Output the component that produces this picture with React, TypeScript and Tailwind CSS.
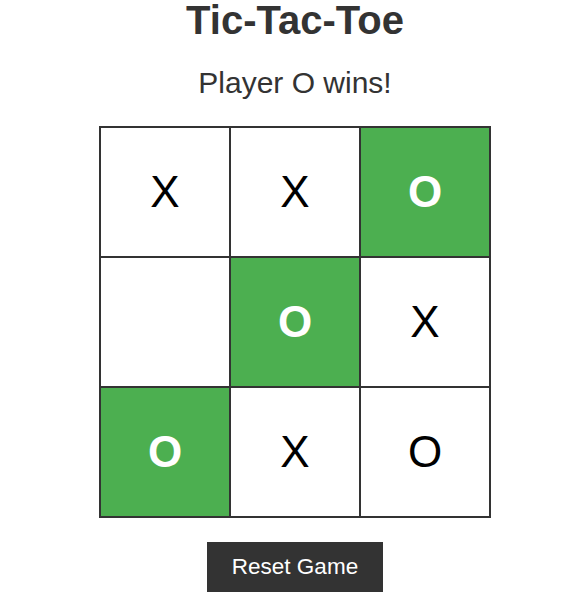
import React from "react";

const board: (string | null)[] = ["X", "X", "O", null, "O", "X", "O", "X", "O"];
const win = [2, 4, 6];

export default function App() {
  return (
    <div
      className="flex w-[578px] flex-col items-center pl-[12px] text-[#333]"
      style={{ fontFamily: '"Liberation Sans", Arial, sans-serif' }}
    >
      <h1 className="text-[40px] font-bold leading-[40px]">Tic-Tac-Toe</h1>
      <p className="mt-[28px] text-[30px] leading-[30px]">Player O wins!</p>
      <div className="mt-[28px] grid grid-cols-[repeat(3,130px)] border border-[#333]">
        {board.map((v, i) => {
          const w = win.includes(i);
          return (
            <div
              key={i}
              className={
                w
                  ? "flex h-[130px] w-[130px] items-center justify-center border border-[#333] bg-[#4caf50] text-[44px] font-bold text-white"
                  : "flex h-[130px] w-[130px] items-center justify-center border border-[#333] bg-white text-[44px] text-black"
              }
            >
              {v}
            </div>
          );
        })}
      </div>
      <button className="mt-[24px] h-[50px] w-[176px] bg-[#333] text-[22.5px] text-white">
        Reset Game
      </button>
    </div>
  );
}
